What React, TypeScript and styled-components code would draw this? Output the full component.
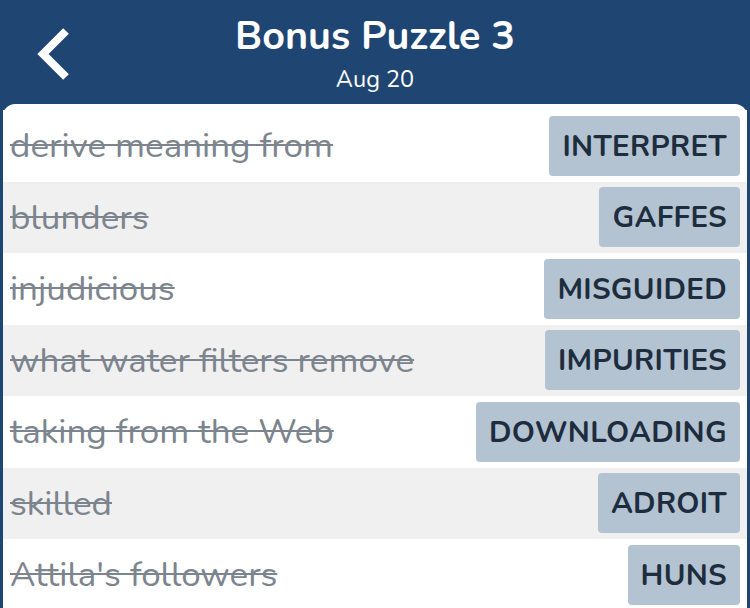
import styled, { createGlobalStyle } from "styled-components";

const clues = [
    { clue: "derive meaning from", answer: "INTERPRET" },
    { clue: "blunders", answer: "GAFFES" },
    { clue: "injudicious", answer: "MISGUIDED" },
    { clue: "what water filters remove", answer: "IMPURITIES" },
    { clue: "taking from the Web", answer: "DOWNLOADING" },
    { clue: "skilled", answer: "ADROIT" },
    { clue: "Attila's followers", answer: "HUNS" },
];

const App = () => (
    <>
        <GlobalStyle />
        <Screen>
            <Header>
                <BackButton aria-label="Back">
                    <svg width="60" height="70" viewBox="0 0 60 70">
                        <path d="M46 11 L23 34 L46 57" fill="none" stroke="#fff" strokeWidth="8" strokeLinecap="butt" strokeLinejoin="miter" />
                    </svg>
                </BackButton>
                <Title>Bonus Puzzle 3</Title>
                <Subtitle>Aug 20</Subtitle>
            </Header>
            <Panel>
                {clues.map((c, i) => (
                    <Row key={c.answer} $shaded={i % 2 === 1}>
                        <Clue>{c.clue}</Clue>
                        <Answer>{c.answer}</Answer>
                    </Row>
                ))}
            </Panel>
        </Screen>
    </>
);

export default App;

const GlobalStyle = createGlobalStyle`
    html, body {
        margin: 0;
        padding: 0;
        background: #1f4673;
    }
`;

const Screen = styled.div`
    width: 750px;
    height: 608px;
    overflow: hidden;
    background: #1f4673;
    font-family: "Nunito", Lato, "Noto Sans", sans-serif;
`;

const Header = styled.div`
    position: relative;
    height: 104px;
    display: flex;
    flex-direction: column;
    align-items: center;
    color: #fff;
`;

const BackButton = styled.div`
    position: absolute;
    left: 20px;
    top: 20px;
`;

const Title = styled.div`
    margin-top: 12px;
    font-size: 39.5px;
    font-weight: 700;
    line-height: 48px;
`;

const Subtitle = styled.div`
    margin-top: 5px;
    font-size: 23.5px;
    line-height: 28px;
`;

const Panel = styled.div`
    margin: 0 3px;
    padding-top: 6px;
    background: #fff;
    border-radius: 12px 12px 0 0;
    height: 520px;
`;

const Row = styled.div<{ $shaded: boolean }>`
    height: 71.5px;
    box-sizing: border-box;
    display: flex;
    align-items: center;
    justify-content: space-between;
    padding: 0 7px 0 7px;
    background: ${(p) => (p.$shaded ? "#f0f0f0" : "#fff")};
`;

const Clue = styled.span`
    font-size: 35px;
    color: #7c848d;
    text-decoration: line-through;
    text-decoration-thickness: 2px;
    white-space: nowrap;
`;

const Answer = styled.span`
    height: 60px;
    display: flex;
    align-items: center;
    padding: 0 13px;
    background: #b3c3d1;
    border-radius: 4px;
    color: #1e2d3d;
    font-size: 29.5px;
    font-weight: 700;
    letter-spacing: 0.3px;
`;
